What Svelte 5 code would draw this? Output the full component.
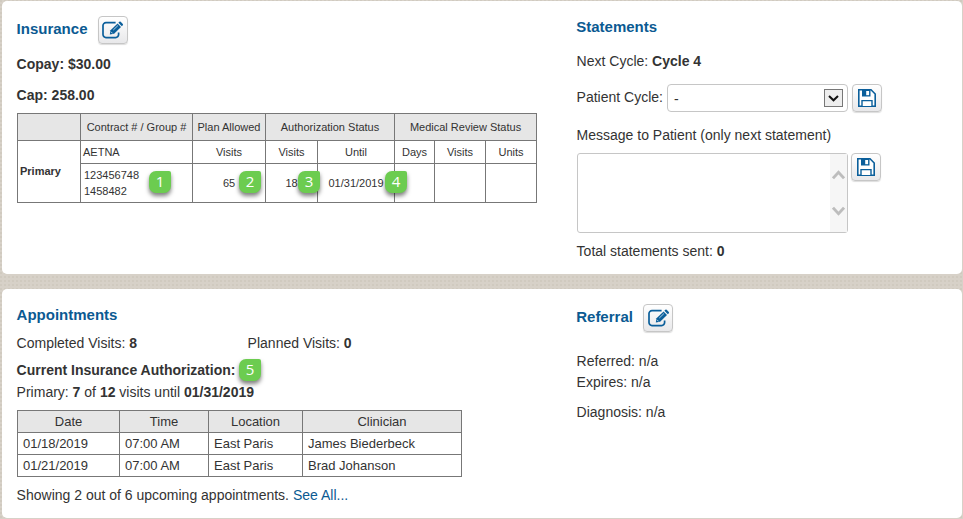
<script>
  const appointments = [
    ['01/18/2019', '07:00 AM', 'East Paris', 'James Biederbeck'],
    ['01/21/2019', '07:00 AM', 'East Paris', 'Brad Johanson'],
  ];
</script>

{#snippet editButton()}
  <button class="btn" aria-label="Edit">
    <svg class="edit" width="22" height="18" viewBox="0 0 22 18">
      <path d="M13.6 1.6H4A3 3 0 0 0 1 4.6v9A3 3 0 0 0 4 16.6h9.6a3 3 0 0 0 3-3v-2.2" fill="none" stroke="#0b5f9b" stroke-width="1.7" />
      <path d="M7.8 13.6l.7-4.4 7.1-6.8 3.4 3.6-6.9 6.7z" fill="#0b5f9b" />
      <path d="M16.4 1.7l.9-.9q.7-.6 1.4 0l2.1 2.1q.6.7 0 1.4l-1 1z" fill="#0b5f9b" />
      <path d="M11.3 9l4.6-4.4M9 10.8l1.6 1.6" fill="none" stroke="#dcebf5" stroke-width=".8" />
    </svg>
  </button>
{/snippet}

{#snippet saveButton()}
  <button class="btn" aria-label="Save">
    <svg width="18" height="18" viewBox="0 0 18 18">
      <path d="M.8.8H13L17.2 5v12.2H.8z" fill="#fff" stroke="#0b5f9b" stroke-width="1.6" />
      <path d="M4 1h8.5v6.5H4z" fill="#0b5f9b" />
      <path d="M8.2 2h2.9v4.2H8.2z" fill="#fff" />
      <path d="M4 17v-5.4h10V17" fill="#fff" stroke="#0b5f9b" stroke-width="1.4" />
    </svg>
  </button>
{/snippet}

{#snippet badge(n)}
  <span class="badge b{n}">{n}</span>
{/snippet}

<main>
  <section class="panel first">
    <div class="left">
      <header><h2>Insurance</h2>{@render editButton()}</header>
      <p class="copay"><b>Copay: $30.00</b></p>
      <p class="cap"><b>Cap: 258.00</b></p>
      <table class="insurance">
        <colgroup>
          <col style="width:64px" /><col style="width:112px" /><col style="width:73px" /><col style="width:52px" />
          <col style="width:77px" /><col style="width:40px" /><col style="width:51px" /><col style="width:51px" />
        </colgroup>
        <tbody>
          <tr class="r1">
            <th></th><th>Contract # / Group #</th><th>Plan Allowed</th>
            <th colspan="2">Authorization Status</th><th colspan="3">Medical Review Status</th>
          </tr>
          <tr class="r2">
            <td rowspan="2" class="l name"><b>Primary</b></td>
            <td class="l">AETNA</td><td>Visits</td><td>Visits</td><td>Until</td><td>Days</td><td>Visits</td><td>Units</td>
          </tr>
          <tr class="r3">
            <td class="l ids">123456748<br />1458482{@render badge(1)}</td>
            <td>65{@render badge(2)}</td><td>18{@render badge(3)}</td><td>01/31/2019{@render badge(4)}</td>
            <td></td><td></td><td></td>
          </tr>
        </tbody>
      </table>
    </div>
    <div class="right">
      <h2 class="statements">Statements</h2>
      <p class="next">Next Cycle: <b>Cycle 4</b></p>
      <div class="cycle">
        <span>Patient Cycle:</span>
        <div class="select">
          <span>-</span>
          <i><svg width="11" height="7" viewBox="0 0 11 7"><path d="M1 1l4.5 4.3L10 1" fill="none" stroke="#111" stroke-width="2" /></svg></i>
        </div>
        {@render saveButton()}
      </div>
      <p class="message">Message to Patient (only next statement)</p>
      <div class="compose">
        <div class="area">
          <div class="scroll">
            <svg width="13" height="10" viewBox="0 0 13 10"><path d="M1 8.3l5.5-6L12 8.3" fill="none" stroke="#bdbdbd" stroke-width="2.8" /></svg>
            <svg width="13" height="10" viewBox="0 0 13 10"><path d="M1 1.7l5.5 6L12 1.7" fill="none" stroke="#bdbdbd" stroke-width="2.8" /></svg>
          </div>
        </div>
        {@render saveButton()}
      </div>
      <p class="total">Total statements sent: <b>0</b></p>
    </div>
  </section>

  <section class="panel second">
    <div class="left">
      <h2>Appointments</h2>
      <div class="visits"><p>Completed Visits: <b>8</b></p><p>Planned Visits: <b>0</b></p></div>
      <p class="current"><b>Current Insurance Authorization:</b>{@render badge(5)}</p>
      <p class="primary">Primary: <b>7</b> of <b>12</b> visits until <b>01/31/2019</b></p>
      <table class="appts">
        <colgroup>
          <col style="width:103px" /><col style="width:89px" /><col style="width:94px" /><col style="width:159px" />
        </colgroup>
        <tbody>
          <tr><th>Date</th><th>Time</th><th>Location</th><th>Clinician</th></tr>
          {#each appointments as row}
            <tr>{#each row as cell}<td>{cell}</td>{/each}</tr>
          {/each}
        </tbody>
      </table>
      <p class="showing">Showing 2 out of 6 upcoming appointments. <a href="#all">See All...</a></p>
    </div>
    <div class="right">
      <header><h2>Referral</h2>{@render editButton()}</header>
      <p class="referred">Referred: n/a</p>
      <p>Expires: n/a</p>
      <p class="diagnosis">Diagnosis: n/a</p>
    </div>
  </section>
</main>

<style>
  :global(body) { margin: 0; }
  main {
    box-sizing: border-box;
    width: 963px;
    height: 519px;
    padding: 1px 1.5px 1px 2px;
    display: flex;
    flex-direction: column;
    gap: 15px;
    overflow: hidden;
    background: radial-gradient(circle at 1px 1px, #d0cabf 0 0.7px, transparent 1px) 0 0 / 4px 4px, #d7d1c8;
    font: 14px/21px "Liberation Sans", Arial, sans-serif;
    color: #333;
  }
  .panel {
    box-sizing: border-box;
    display: flex;
    background: #fff;
    border-radius: 5px;
    padding: 15px 0 0 15px;
  }
  .first { height: 273px; }
  .second { height: 229px; }
  .left { width: 559.6px; flex: none; }
  .left > p, .visits { text-indent: -0.4px; }
  p { margin: 0; white-space: nowrap; }
  h2 { margin: 0; font-size: 15px; line-height: 21px; color: #0b5a92; text-indent: -0.4px; }
  header { display: flex; gap: 10.5px; height: 28px; }
  header h2 { line-height: 25px; }
  .btn {
    box-sizing: border-box;
    flex: none;
    width: 30px;
    height: 28px;
    padding: 0;
    border: 1px solid #c6c6c6;
    border-radius: 4px;
    background: linear-gradient(#fff, #e8e8ea);
    box-shadow: 0 1px 1px #ddd;
    display: flex;
    align-items: center;
    justify-content: center;
  }
  .btn .edit { margin-left: 1px; }
  .copay { margin-top: 10px; }
  .cap { margin-top: 10px; }

  table {
    table-layout: fixed;
    border-collapse: separate;
    border-spacing: 0;
    margin-top: 7px;
    margin-left: 0;
  }
  th, td {
    box-sizing: border-box;
    padding: 0;
    border: solid #777;
    border-width: 0 1px 1px 0;
    font-weight: normal;
    text-align: center;
    white-space: nowrap;
  }
  tr > :first-child { border-left-width: 1px; }
  .r3 > :first-child { border-left-width: 0; }
  tr:first-child > * { border-top-width: 1px; }
  th { background: #e6e6e6; }
  .insurance { width: 520px; font-size: 11px; line-height: 16px; }
  .r1 { height: 28px; }
  .r2 { height: 23px; }
  .r3 { height: 39px; }
  .r3 td { position: relative; }
  .insurance .l { text-align: left; padding-left: 2px; }
  .insurance .name { padding-bottom: 2px; }
  .insurance .ids { padding-left: 3px; }
  .appts { width: 445px; font-size: 13px; line-height: 20px; }
  .appts tr { height: 22px; }
  .appts tr:first-child { height: 23px; }
  .appts td { text-align: left; padding-left: 5px; }

  .badge {
    position: absolute;
    top: 7px;
    width: 22px;
    height: 22px;
    border-radius: 7px 2px 7px 7px;
    background: #6ccc50;
    box-shadow: 0 3px 4px rgba(0, 0, 0, 0.5);
    color: #fff;
    font: 15px/21px "Open Sans", "Noto Sans", sans-serif;
    text-align: center;
    text-indent: 0;
    z-index: 1;
  }
  .b1 { left: 68px; }
  .b2 { left: 46px; }
  .b3 { left: 32px; }
  .b4 { left: 67px; }
  .current { position: relative; }
  .b5 { left: 222px; top: -1px; }

  .next { margin-top: 14px; }
  .cycle { display: flex; height: 28px; margin-top: 12px; line-height: 27px; }
  .cycle > span { width: 90.4px; }
  .select {
    box-sizing: border-box;
    width: 181px;
    margin-right: 4px;
    padding: 0 4px 0 6px;
    border: 1px solid #c6c6c6;
    border-radius: 4px;
    display: flex;
    align-items: center;
    justify-content: space-between;
  }
  .select > span { padding-top: 2px; }
  .select i {
    box-sizing: border-box;
    width: 19px;
    height: 18px;
    border: 1px solid #777;
    background: #eee;
    display: flex;
    align-items: center;
    justify-content: center;
  }
  .message { margin-top: 13px; }
  .compose { display: flex; gap: 3px; margin-top: 7px; margin-left: 0.4px; }
  .area {
    box-sizing: border-box;
    width: 271px;
    height: 80px;
    border: 1px solid #c6c6c6;
    border-radius: 3px;
    display: flex;
    justify-content: flex-end;
  }
  .scroll {
    box-sizing: border-box;
    width: 17px;
    padding: 16px 0 16px;
    background: #f6f6f6;
    display: flex;
    flex-direction: column;
    align-items: center;
    justify-content: space-between;
  }
  .total { margin-top: 8px; }

  .visits { display: flex; margin-top: 8px; }
  .visits p:first-child { width: 231px; }
  .current { margin-top: 6px; }
  .primary { margin-top: 1px; }
  .showing { margin-top: 8px; }
  a { color: #0b5a92; text-decoration: none; }
  .referred { margin-top: 19px; }
  .diagnosis { margin-top: 9px; }
</style>
